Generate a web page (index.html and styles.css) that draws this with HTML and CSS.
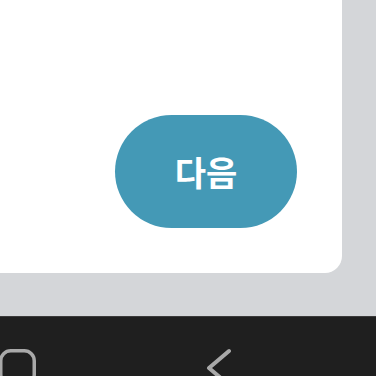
FILE: index.html
```html
<!DOCTYPE html>
<html lang="ko">
<head>
<meta charset="utf-8">
<link rel="stylesheet" href="styles.css">
</head>
<body>
<div class="screen">
  <div class="content">
    <div class="card">
      <button class="next-btn">다음</button>
    </div>
  </div>
  <div class="navbar">
    <svg class="nav-recent" width="44" height="44" viewBox="0 0 44 44">
      <rect x="4.75" y="5.75" width="33.5" height="33.5" rx="10" fill="none" stroke="#a9a9a9" stroke-width="3.5"/>
    </svg>
    <svg class="nav-back" width="40" height="45" viewBox="0 0 40 45">
      <polyline points="29,6 9,23 29,40" fill="none" stroke="#a9a9a9" stroke-width="4" stroke-linecap="round" stroke-linejoin="round"/>
    </svg>
  </div>
</div>
</body>
</html>
```
FILE: styles.css
```css
html, body {
  margin: 0;
  padding: 0;
}
body {
  width: 376px;
  height: 376px;
  overflow: hidden;
  font-family: "Noto Sans CJK KR", "Noto Sans", sans-serif;
}
.screen {
  width: 376px;
  height: 376px;
  display: flex;
  flex-direction: column;
}
.content {
  height: 316px;
  background: #d4d6d9;
}
.card {
  width: 342px;
  height: 273px;
  background: #ffffff;
  border-bottom-right-radius: 17px;
  display: flex;
  justify-content: flex-end;
  align-items: flex-end;
  box-sizing: border-box;
  padding: 0 45px 45px 0;
}
.next-btn {
  width: 182px;
  height: 113px;
  border: none;
  border-radius: 57px;
  background: #4499b6;
  color: #ffffff;
  font-family: "Noto Sans CJK KR", "Noto Sans", sans-serif;
  font-weight: 700;
  font-size: 34px;
  padding: 0;
  display: flex;
  align-items: center;
  justify-content: center;
}
.navbar {
  flex: 1;
  background: #1f1f1f;
  border-top: 1px solid #3b3b3b;
  display: flex;
  align-items: flex-start;
  padding-top: 28px;
  overflow: hidden;
}
.nav-recent {
  margin-left: -4px;
  flex: none;
}
.nav-back {
  margin-left: 160px;
  flex: none;
}
```
